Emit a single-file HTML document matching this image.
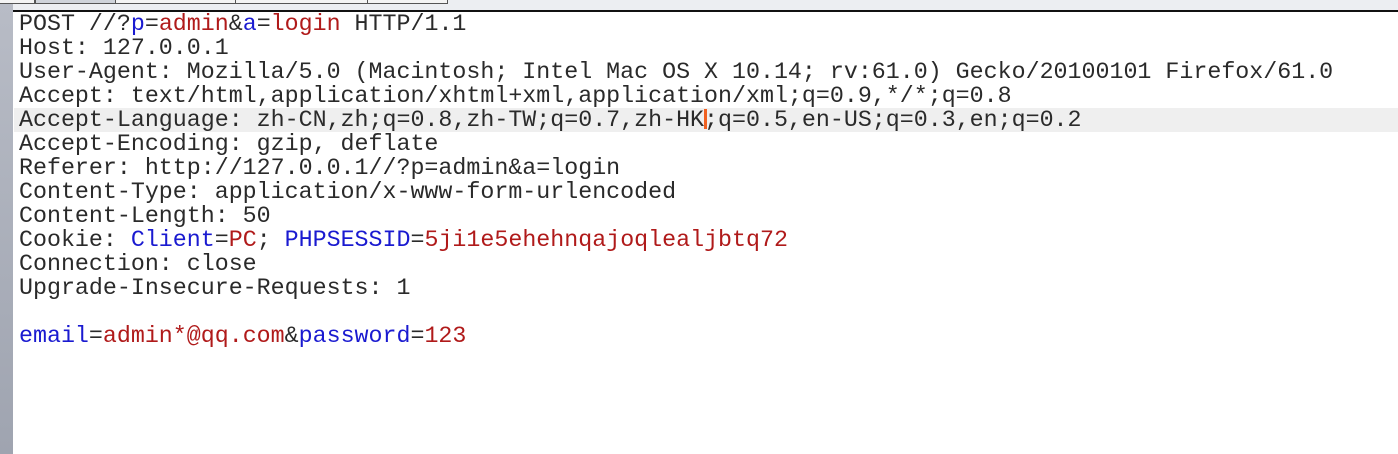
<!DOCTYPE html>
<html><head><style>
body{margin:0;width:1398px;height:454px;background:#fff;position:relative;overflow:hidden}
#ls{position:absolute;left:0;top:0;width:13px;height:454px;background:linear-gradient(#b8bcc6,#9fa4b0)}
#top{position:absolute;left:13px;top:0;right:0;height:10px;background:#eceef2}
.tab{position:absolute;top:0;height:3px;border:1px solid #555;border-top:none;background:#f4f4f4}
#line{position:absolute;left:13px;right:0;top:10px;height:2px;background:#111}
#hl{position:absolute;left:14px;right:0;top:108px;height:24px;background:#efefef}
pre{position:absolute;left:19px;top:12px;margin:0;font-family:"Liberation Mono",monospace;font-size:23.3px;line-height:24px;color:#2a2a2a;letter-spacing:0}
.b{color:#1a1ad0}.r{color:#b01a1a}
.cur{display:inline-block;width:3px;height:20px;background:#f06020;vertical-align:-3px;margin-right:-3px}
</style></head><body>
<div id="ls"></div><div id="top"></div>
<div class="tab" style="left:-1px;width:34px"></div>
<div class="tab" style="left:35px;width:79px;background:#cfd3da"></div>
<div class="tab" style="left:115px;width:119px"></div>
<div class="tab" style="left:235px;width:131px"></div>
<div class="tab" style="left:367px;width:79px"></div>
<div id="line"></div><div id="hl"></div>
<pre>POST //?<span class="b">p</span>=<span class="r">admin</span>&amp;<span class="b">a</span>=<span class="r">login</span> HTTP/1.1
Host: 127.0.0.1
User-Agent: Mozilla/5.0 (Macintosh; Intel Mac OS X 10.14; rv:61.0) Gecko/20100101 Firefox/61.0
Accept: text/html,application/xhtml+xml,application/xml;q=0.9,*/*;q=0.8
Accept-Language: zh-CN,zh;q=0.8,zh-TW;q=0.7,zh-HK<span class="cur"></span>;q=0.5,en-US;q=0.3,en;q=0.2
Accept-Encoding: gzip, deflate
Referer: http://127.0.0.1//?p=admin&amp;a=login
Content-Type: application/x-www-form-urlencoded
Content-Length: 50
Cookie: <span class="b">Client</span>=<span class="r">PC</span>; <span class="b">PHPSESSID</span>=<span class="r">5ji1e5ehehnqajoqlealjbtq72</span>
Connection: close
Upgrade-Insecure-Requests: 1

<span class="b">email</span>=<span class="r">admin*@qq.com</span>&amp;<span class="b">password</span>=<span class="r">123</span></pre>
</body></html>
